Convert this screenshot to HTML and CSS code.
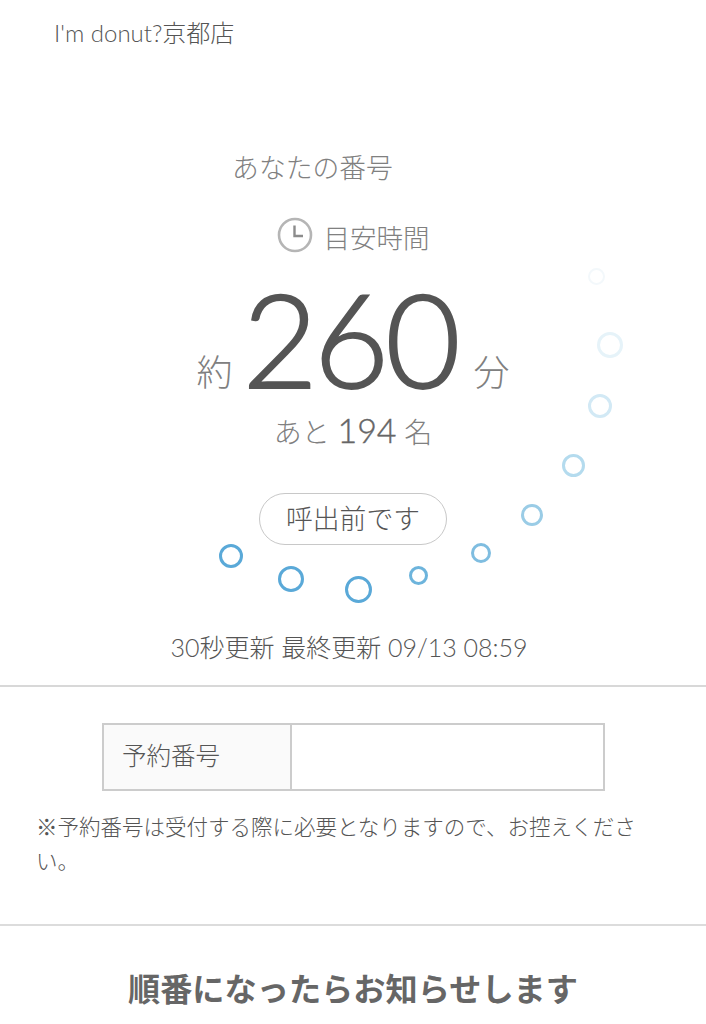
FILE: index.html
```html
<!DOCTYPE html>
<html lang="ja">
<head>
<meta charset="utf-8">
<title>I'm donut?京都店</title>
<link rel="stylesheet" href="styles.css">
</head>
<body>
<header class="shop">I'm donut?京都店</header>
<section class="status">
  <div class="your-number">あなたの番号</div>
  <div class="estimate">
    <svg class="clock" viewBox="0 0 36 36" aria-hidden="true"><circle cx="18" cy="18" r="16" fill="none" stroke="#b5b5b5" stroke-width="2.6"/><path d="M17.5 8.5V19H26" fill="none" stroke="#8c8c8c" stroke-width="2.4"/></svg>
    <span>目安時間</span>
  </div>
  <div class="wait"><span class="unit">約</span><span class="big">260</span><span class="unit">分</span></div>
  <div class="remain">あと <span class="count">194</span> 名</div>
  <div class="pill">呼出前です</div>
  <div class="updated">30秒更新 最終更新 09/13 08:59</div>
  <div class="spinner" aria-hidden="true">
    <i class="dot d1"></i><i class="dot d2"></i><i class="dot d3"></i><i class="dot d4"></i><i class="dot d5"></i>
    <i class="dot d6"></i><i class="dot d7"></i><i class="dot d8"></i><i class="dot d9"></i><i class="dot d10"></i>
  </div>
</section>
<section class="reservation">
  <div class="res-table">
    <div class="res-label">予約番号</div>
    <div class="res-value"></div>
  </div>
  <p class="note">※予約番号は受付する際に必要となりますので、お控えください。</p>
</section>
<section class="notify">
  <h2>順番になったらお知らせします</h2>
</section>
</body>
</html>
```
FILE: styles.css
```css
* { box-sizing: border-box; }
html, body { margin: 0; padding: 0; background: #fff; }
body {
  width: 706px;
  height: 1024px;
  overflow: hidden;
  position: relative;
  font-family: "Lato", "Noto Sans CJK JP", sans-serif;
  font-weight: 300;
  color: #666;
}
.shop {
  padding: 18px 0 0 54px;
  height: 150px;
  font-size: 24px;
  line-height: 30px;
  color: #555;
}
.status {
  height: 537px;
  border-bottom: 2px solid #d8d8d8;
  display: flex;
  flex-direction: column;
  align-items: center;
}
.your-number {
  font-size: 26.8px;
  line-height: 36px;
  color: #808080;
  margin-right: 81px;
}
.estimate {
  display: flex;
  align-items: center;
  gap: 11px;
  margin-top: 30px;
  height: 40px;
  font-size: 26.5px;
  color: #808080;
}
.clock { width: 36px; height: 36px; margin-top: -2px; }
.wait {
  display: flex;
  align-items: flex-end;
  justify-content: center;
  gap: 17px;
  height: 100px;
  margin-top: 32px;
}
.unit { font-size: 36px; line-height: 40px; margin-bottom: -4px; color: #808080; }
.big {
  font-size: 130px;
  line-height: 100px;
  letter-spacing: -4px;
  margin-left: -7px;
  -webkit-text-stroke: 2px #555;
  color: #555;
}
.remain {
  font-size: 28px;
  line-height: 40px;
  color: #808080;
  margin-top: 22px;
}
.count { font-size: 34px; -webkit-text-stroke: 0.4px #666; color: #666; }
.pill {
  width: 188px;
  height: 52px;
  margin-top: 41px;
  padding-bottom: 4px;
  border: 1.5px solid #c8c8c8;
  border-radius: 26px;
  display: flex;
  align-items: center;
  justify-content: center;
  font-size: 26.8px;
  color: #555;
}
.updated {
  margin-top: 84px;
  margin-right: 8px;
  font-size: 25px;
  line-height: 36px;
  color: #555;
}
.spinner { position: absolute; inset: 0; pointer-events: none; }
.dot { position: absolute; display: block; border-radius: 50%; border-style: solid; }
.d1 { left: 219px; top: 544px; width: 24px; height: 24px; border-width: 3.5px; border-color: #5aa9d8; }
.d2 { left: 278px; top: 566px; width: 26px; height: 26px; border-width: 3.5px; border-color: #5aa9d8; }
.d3 { left: 345px; top: 576px; width: 27px; height: 27px; border-width: 3.5px; border-color: #5aa9d8; }
.d4 { left: 409px; top: 566px; width: 19px; height: 19px; border-width: 3.5px; border-color: #6db4dc; }
.d5 { left: 471px; top: 543px; width: 20px; height: 20px; border-width: 3.5px; border-color: #7fbde0; }
.d6 { left: 521px; top: 504px; width: 22px; height: 22px; border-width: 3.5px; border-color: #9accE6; }
.d7 { left: 562px; top: 454px; width: 23px; height: 23px; border-width: 3.5px; border-color: #b4dbee; }
.d8 { left: 588px; top: 394px; width: 24px; height: 24px; border-width: 3.5px; border-color: #d2e9f5; }
.d9 { left: 597px; top: 332px; width: 26px; height: 26px; border-width: 3.5px; border-color: #e6f3f9; }
.d10 { left: 588px; top: 268px; width: 17px; height: 17px; border-width: 2.5px; border-color: #f3f8fb; }
.reservation {
  height: 239px;
  border-bottom: 2px solid #dcdcdc;
  padding: 36px 36px 0;
}
.res-table {
  display: flex;
  width: 503px;
  height: 68px;
  margin-left: 66px;
  border: 2px solid #ccc;
}
.res-label {
  width: 188px;
  padding: 0 0 6px 18px;
  background: #fafafa;
  border-right: 2px solid #ccc;
  display: flex;
  align-items: center;
  font-size: 24.5px;
  color: #555;
}
.res-value { flex: 1; }
.note {
  margin: 19px 0 0;
  width: 606px;
  font-size: 21.5px;
  line-height: 34px;
  color: #555;
}
.notify h2 {
  margin: 40px 0 0;
  text-align: center;
  font-size: 32.2px;
  line-height: 46px;
  font-weight: 700;
  color: #666;
}
```
